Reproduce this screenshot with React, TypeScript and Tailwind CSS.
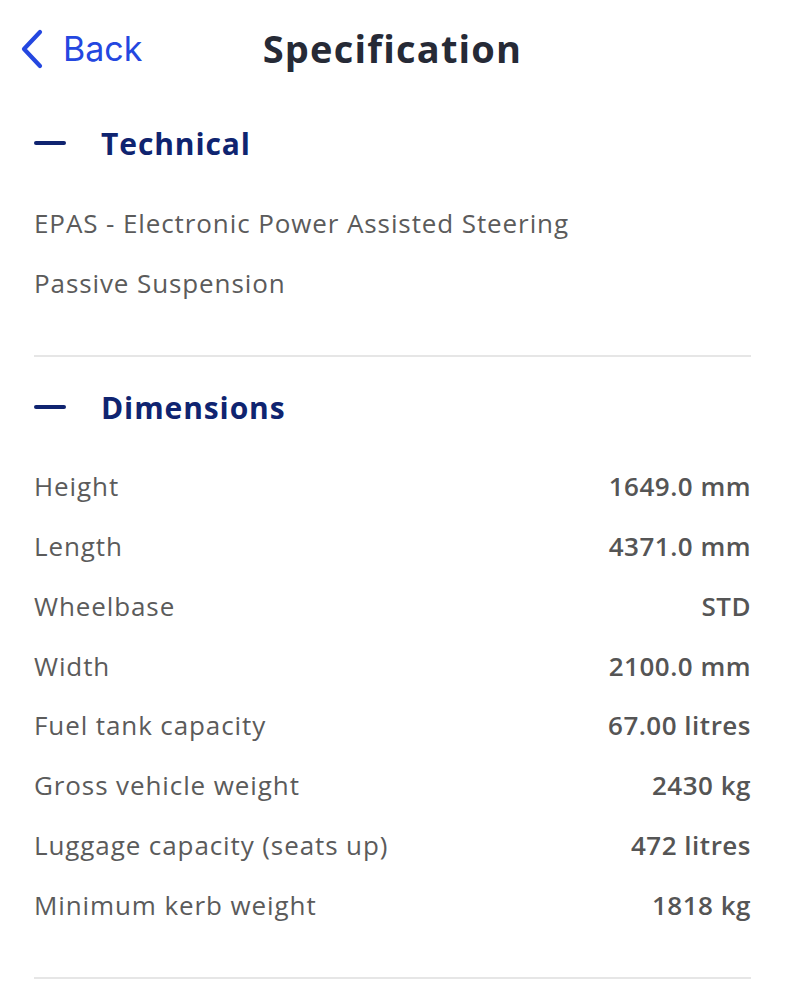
import React from "react";

const dims: [string, string][] = [
  ["Height", "1649.0 mm"],
  ["Length", "4371.0 mm"],
  ["Wheelbase", "STD"],
  ["Width", "2100.0 mm"],
  ["Fuel tank capacity", "67.00 litres"],
  ["Gross vehicle weight", "2430 kg"],
  ["Luggage capacity (seats up)", "472 litres"],
  ["Minimum kerb weight", "1818 kg"],
];

function Heading({ title }: { title: string }) {
  return (
    <div className="h-[60px] flex items-center">
      <div className="w-[32px] h-[4px] rounded-full bg-[#0f2470]" />
      <div className="ml-[35px] text-[30px] font-bold text-[#0f2470] tracking-[0.9px]">{title}</div>
    </div>
  );
}

export default function App() {
  return (
    <div className="w-[785px] h-[1000px] bg-white overflow-hidden" style={{ fontFamily: "'Open Sans', 'Noto Sans', sans-serif" }}>
      <div className="relative h-[96px] flex items-center">
        <div className="absolute left-[18px] top-[29px] flex items-center">
          <svg width="28" height="40" viewBox="0 0 28 40" fill="none">
            <path d="M22 3 L6 20 L22 37" stroke="#2447e0" strokeWidth="4.2" strokeLinecap="round" strokeLinejoin="round" />
          </svg>
          <span className="ml-[17px] text-[34px] text-[#2447e0] leading-none" style={{ fontFamily: "Inter, Roboto, sans-serif" }}>Back</span>
        </div>
        <div className="w-full text-center">
          <span className="inline-block text-[38px] font-bold text-[#262a36] tracking-[1.2px]">Specification</span>
        </div>
      </div>
      <div className="px-[34px] pt-[17px]">
        <Heading title="Technical" />
        <div className="mt-[20px]">
          {["EPAS - Electronic Power Assisted Steering", "Passive Suspension"].map((t) => (
            <div key={t} className="h-[60px] flex items-center text-[26px] text-[#5b5b5b] tracking-[0.9px]">{t}</div>
          ))}
        </div>
        <div className="mt-[42px] h-[2px] bg-[#e6e6e6]" />
        <div className="mt-[20px]">
          <Heading title="Dimensions" />
        </div>
        <div className="mt-[20px]">
          {dims.map(([k, v]) => (
            <div key={k} className="h-[59.75px] flex items-center justify-between text-[26px]">
              <span className="text-[#5b5b5b] tracking-[0.9px]">{k}</span>
              <span className="font-semibold text-[#555555] text-[26px] tracking-[0.5px]">{v}</span>
            </div>
          ))}
        </div>
        <div className="mt-[42px] h-[2px] bg-[#e6e6e6]" />
      </div>
    </div>
  );
}
